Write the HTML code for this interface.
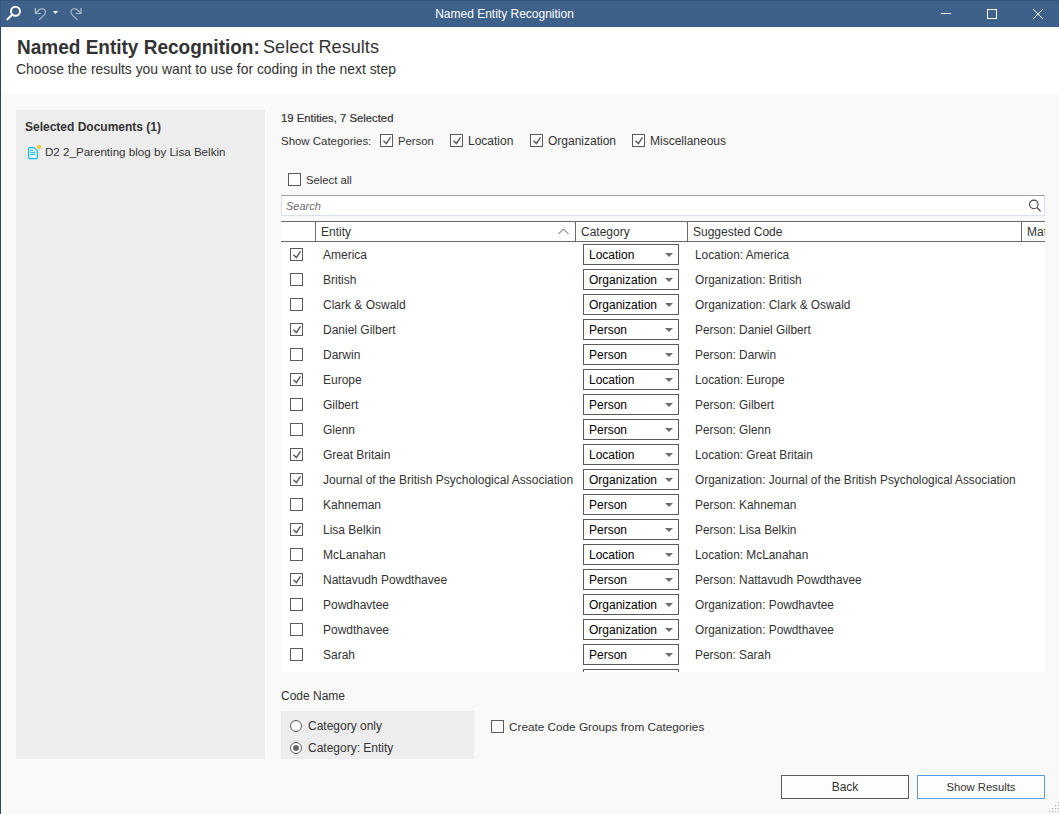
<!DOCTYPE html>
<html><head><meta charset="utf-8"><style>
*{box-sizing:border-box;margin:0;padding:0}
html,body{width:1059px;height:814px;overflow:hidden;background:#f9f9f9;font-family:"Liberation Sans",sans-serif;color:#333}
.abs{position:absolute}
#frame{position:absolute;left:0;top:27px;width:1px;height:787px;background:#24466f}
#title{position:absolute;left:0;top:0;width:1059px;height:27px;background:#3e6189;border-top:1px solid #35557b;border-bottom:1px solid #37587f}
#title .tt{position:absolute;left:0;width:1009px;top:6px;text-align:center;color:#fff;font-size:12px;line-height:14px}
#hdr{position:absolute;left:1px;top:27px;width:1058px;height:67px;background:#fff}
.t12{position:absolute;white-space:nowrap;font-size:12px;line-height:16px;color:#333}
.rt{position:absolute;white-space:nowrap;font-size:12px;line-height:27px;color:#333}
.cb{position:absolute;width:13px;height:13px;border:1px solid #5a5a5a;background:#fff}
#left{position:absolute;left:16px;top:110px;width:249px;height:649px;background:#ededed}
#table{position:absolute;left:281px;top:221px;width:764px;height:451px;background:#fff;overflow:hidden}
#thead{position:absolute;left:0;top:0;width:764px;height:21px;border-top:1px solid #6a6a6a;border-bottom:1px solid #6a6a6a}
.vd{position:absolute;top:0;width:1px;height:19px;background:#6a6a6a}
.ht{position:absolute;top:1px;font-size:12px;line-height:19px;white-space:nowrap;color:#333}
.combo{position:absolute;width:96px;height:21px;border:1px solid #5a5a5a;background:#fff}
.combo span{position:absolute;left:5px;top:1px;font-size:12px;line-height:19px;color:#000}
.combo i{position:absolute;left:81px;top:8px;width:0;height:0;border-left:4px solid transparent;border-right:4px solid transparent;border-top:4px solid #6d6d6d}
#search{position:absolute;left:281px;top:195px;width:764px;height:21px;background:#fff;border:1px solid #dbe1e8;border-top-color:#a0a0a0}
#search span{position:absolute;left:4px;top:1px;line-height:19px;font-size:11px;font-style:italic;color:#6d6d6d}
#radiobox{position:absolute;left:281px;top:711px;width:193px;height:48px;background:#ededed}
.rad{position:absolute;width:12px;height:12px;border:1px solid #5a5a5a;border-radius:50%;background:#fff}
.btn{position:absolute;top:775px;width:128px;height:24px;border:1px solid #5a5a5a;background:#fdfdfd;text-align:center;font-size:12px;line-height:23px;color:#333}
</style></head><body>
<div id="title">
 <svg class="abs" style="left:0px;top:-1px" width="30" height="26" viewBox="0 0 30 26"><circle cx="15.5" cy="11.3" r="4.5" fill="none" stroke="#fff" stroke-width="2"/><path d="M12.2 14.8 L7.4 19.3" stroke="#fff" stroke-width="2" stroke-linecap="round"/></svg>
 <svg class="abs" style="left:0px;top:-1px" width="90" height="26" viewBox="0 0 90 26"><path d="M35.4 8 V13.5 H40.8" fill="none" stroke="#b4c2d4" stroke-width="1.1"/><path d="M35.8 13.2 L38.8 10 C41 8 44.5 8.5 45.3 11 C45.8 12.5 45.2 14 44 15.2 L39 19.8" fill="none" stroke="#b4c2d4" stroke-width="1.1"/><path d="M52.9 11 L58.1 11 L55.5 14Z" fill="#fff"/><path d="M81 8 V13.5 H75.6" fill="none" stroke="#b4c2d4" stroke-width="1.1"/><path d="M80.6 13.2 L77.6 10 C75.4 8 71.9 8.5 71.1 11 C70.6 12.5 71.2 14 72.4 15.2 L77.4 19.8" fill="none" stroke="#b4c2d4" stroke-width="1.1"/></svg>
 <div class="tt">Named Entity Recognition</div>
 <div class="abs" style="left:941px;top:12px;width:10px;height:1px;background:#fff"></div>
 <div class="abs" style="left:987px;top:8px;width:10px;height:10px;border:1px solid #fff"></div>
 <svg class="abs" style="left:1033px;top:8px" width="10" height="10" viewBox="0 0 10 10"><path d="M0 0 L10 10 M10 0 L0 10" stroke="#fff" stroke-width="1"/></svg>
</div>
<div id="frame"></div><div class="abs" style="left:0;top:1px;width:1px;height:25px;background:#395a80"></div>
<div id="hdr">
 <div class="abs" style="left:16px;top:9px;font-size:20px;line-height:22px;white-space:nowrap;color:#333;font-weight:bold;transform:scaleX(0.95);transform-origin:0 0">Named Entity Recognition:</div><div class="abs" style="left:262px;top:9px;font-size:19px;line-height:22px;white-space:nowrap;color:#333;transform:scaleX(0.955);transform-origin:0 0">Select Results</div>
 <div class="abs" style="left:15px;top:34px;font-size:13.9px;line-height:17px;white-space:nowrap;color:#333">Choose the results you want to use for coding in the next step</div>
</div>
<div id="left">
 <div class="abs" style="left:9px;top:9px;font-size:12px;line-height:16px;font-weight:bold;white-space:nowrap">Selected Documents (1)</div>
 <svg class="abs" style="left:11px;top:35px" width="16" height="16" viewBox="0 0 16 16"><path d="M2.6 2.6 Q1.6 2.6 1.6 3.6 V12.6 Q1.6 13.6 2.6 13.6 H9.4 Q10.4 13.6 10.4 12.6 V6 L7 2.6 Z" fill="#e4f6fb" stroke="#1bb8e2" stroke-width="1.2"/><path d="M3.3 5.4 H6 M3.3 7.4 H8.5 M3.3 9.5 H8.5" stroke="#1bb8e2" stroke-width="1"/><circle cx="12.1" cy="2" r="2.1" fill="#ffcc22"/></svg>
 <div class="abs" style="left:29px;top:34px;font-size:11.6px;line-height:16px;white-space:nowrap">D2 2_Parenting blog by Lisa Belkin</div>
</div>
<div class="t12" style="left:281px;top:110px;font-size:11.3px;-webkit-text-stroke:0.2px #333">19 Entities, 7 Selected</div>
<div class="t12" style="left:281px;top:133px;font-size:11.45px">Show Categories:</div>
<div class="cb" style="left:380px;top:134px"><svg width="13" height="13" viewBox="0 0 13 13" style="position:absolute;left:0;top:0"><path d="M2.4 5.7 L5.4 8.5 L9.5 2.4" fill="none" stroke="#606060" stroke-width="1.5"/></svg></div><div class="t12" style="left:398px;top:133px;font-size:11.3px">Person</div>
<div class="cb" style="left:450px;top:134px"><svg width="13" height="13" viewBox="0 0 13 13" style="position:absolute;left:0;top:0"><path d="M2.4 5.7 L5.4 8.5 L9.5 2.4" fill="none" stroke="#606060" stroke-width="1.5"/></svg></div><div class="t12" style="left:468px;top:133px">Location</div>
<div class="cb" style="left:530px;top:134px"><svg width="13" height="13" viewBox="0 0 13 13" style="position:absolute;left:0;top:0"><path d="M2.4 5.7 L5.4 8.5 L9.5 2.4" fill="none" stroke="#606060" stroke-width="1.5"/></svg></div><div class="t12" style="left:548px;top:133px">Organization</div>
<div class="cb" style="left:632px;top:134px"><svg width="13" height="13" viewBox="0 0 13 13" style="position:absolute;left:0;top:0"><path d="M2.4 5.7 L5.4 8.5 L9.5 2.4" fill="none" stroke="#606060" stroke-width="1.5"/></svg></div><div class="t12" style="left:650px;top:133px">Miscellaneous</div>
<div class="cb" style="left:288px;top:173px"></div><div class="t12" style="left:306px;top:172px;font-size:11.3px">Select all</div>
<div id="search"><span>Search</span>
 <svg class="abs" style="left:746px;top:2px" width="16" height="16" viewBox="0 0 16 16"><circle cx="5.8" cy="6.4" r="4.3" fill="none" stroke="#444" stroke-width="1.1"/><path d="M8.9 9.5 L12.6 13.3" stroke="#444" stroke-width="1.1"/></svg>
</div>
<div id="table">
 <div id="thead">
  <div class="vd" style="left:34px"></div>
  <div class="ht" style="left:40px">Entity</div>
  <svg class="abs" style="left:277px;top:6px" width="11" height="7" viewBox="0 0 11 7"><path d="M0.5 6 L5.5 1 L10.5 6" fill="none" stroke="#555" stroke-width="1"/></svg>
  <div class="vd" style="left:294px"></div>
  <div class="ht" style="left:300px">Category</div>
  <div class="vd" style="left:406px"></div>
  <div class="ht" style="left:412px">Suggested Code</div>
  <div class="vd" style="left:740px"></div>
  <div class="ht" style="left:746px">Matches</div>
 </div>
 <div class="cb" style="left:9px;top:27px"><svg width="13" height="13" viewBox="0 0 13 13" style="position:absolute;left:0;top:0"><path d="M2.4 5.7 L5.4 8.5 L9.5 2.4" fill="none" stroke="#606060" stroke-width="1.5"/></svg></div><div class="rt" style="left:42px;top:21px">America</div><div class="combo" style="left:302px;top:23px"><span>Location</span><i></i></div><div class="rt" style="left:414px;top:21px;font-size:11.85px">Location: America</div><div class="cb" style="left:9px;top:52px"></div><div class="rt" style="left:42px;top:46px">British</div><div class="combo" style="left:302px;top:48px"><span>Organization</span><i></i></div><div class="rt" style="left:414px;top:46px;font-size:11.85px">Organization: British</div><div class="cb" style="left:9px;top:77px"></div><div class="rt" style="left:42px;top:71px">Clark &amp; Oswald</div><div class="combo" style="left:302px;top:73px"><span>Organization</span><i></i></div><div class="rt" style="left:414px;top:71px;font-size:11.85px">Organization: Clark &amp; Oswald</div><div class="cb" style="left:9px;top:102px"><svg width="13" height="13" viewBox="0 0 13 13" style="position:absolute;left:0;top:0"><path d="M2.4 5.7 L5.4 8.5 L9.5 2.4" fill="none" stroke="#606060" stroke-width="1.5"/></svg></div><div class="rt" style="left:42px;top:96px">Daniel Gilbert</div><div class="combo" style="left:302px;top:98px"><span>Person</span><i></i></div><div class="rt" style="left:414px;top:96px;font-size:11.85px">Person: Daniel Gilbert</div><div class="cb" style="left:9px;top:127px"></div><div class="rt" style="left:42px;top:121px">Darwin</div><div class="combo" style="left:302px;top:123px"><span>Person</span><i></i></div><div class="rt" style="left:414px;top:121px;font-size:11.85px">Person: Darwin</div><div class="cb" style="left:9px;top:152px"><svg width="13" height="13" viewBox="0 0 13 13" style="position:absolute;left:0;top:0"><path d="M2.4 5.7 L5.4 8.5 L9.5 2.4" fill="none" stroke="#606060" stroke-width="1.5"/></svg></div><div class="rt" style="left:42px;top:146px">Europe</div><div class="combo" style="left:302px;top:148px"><span>Location</span><i></i></div><div class="rt" style="left:414px;top:146px;font-size:11.85px">Location: Europe</div><div class="cb" style="left:9px;top:177px"></div><div class="rt" style="left:42px;top:171px">Gilbert</div><div class="combo" style="left:302px;top:173px"><span>Person</span><i></i></div><div class="rt" style="left:414px;top:171px;font-size:11.85px">Person: Gilbert</div><div class="cb" style="left:9px;top:202px"></div><div class="rt" style="left:42px;top:196px">Glenn</div><div class="combo" style="left:302px;top:198px"><span>Person</span><i></i></div><div class="rt" style="left:414px;top:196px;font-size:11.85px">Person: Glenn</div><div class="cb" style="left:9px;top:227px"><svg width="13" height="13" viewBox="0 0 13 13" style="position:absolute;left:0;top:0"><path d="M2.4 5.7 L5.4 8.5 L9.5 2.4" fill="none" stroke="#606060" stroke-width="1.5"/></svg></div><div class="rt" style="left:42px;top:221px">Great Britain</div><div class="combo" style="left:302px;top:223px"><span>Location</span><i></i></div><div class="rt" style="left:414px;top:221px;font-size:11.85px">Location: Great Britain</div><div class="cb" style="left:9px;top:252px"><svg width="13" height="13" viewBox="0 0 13 13" style="position:absolute;left:0;top:0"><path d="M2.4 5.7 L5.4 8.5 L9.5 2.4" fill="none" stroke="#606060" stroke-width="1.5"/></svg></div><div class="rt" style="left:42px;top:246px">Journal of the British Psychological Association</div><div class="combo" style="left:302px;top:248px"><span>Organization</span><i></i></div><div class="rt" style="left:414px;top:246px;font-size:11.85px">Organization: Journal of the British Psychological Association</div><div class="cb" style="left:9px;top:277px"></div><div class="rt" style="left:42px;top:271px">Kahneman</div><div class="combo" style="left:302px;top:273px"><span>Person</span><i></i></div><div class="rt" style="left:414px;top:271px;font-size:11.85px">Person: Kahneman</div><div class="cb" style="left:9px;top:302px"><svg width="13" height="13" viewBox="0 0 13 13" style="position:absolute;left:0;top:0"><path d="M2.4 5.7 L5.4 8.5 L9.5 2.4" fill="none" stroke="#606060" stroke-width="1.5"/></svg></div><div class="rt" style="left:42px;top:296px">Lisa Belkin</div><div class="combo" style="left:302px;top:298px"><span>Person</span><i></i></div><div class="rt" style="left:414px;top:296px;font-size:11.85px">Person: Lisa Belkin</div><div class="cb" style="left:9px;top:327px"></div><div class="rt" style="left:42px;top:321px">McLanahan</div><div class="combo" style="left:302px;top:323px"><span>Location</span><i></i></div><div class="rt" style="left:414px;top:321px;font-size:11.85px">Location: McLanahan</div><div class="cb" style="left:9px;top:352px"><svg width="13" height="13" viewBox="0 0 13 13" style="position:absolute;left:0;top:0"><path d="M2.4 5.7 L5.4 8.5 L9.5 2.4" fill="none" stroke="#606060" stroke-width="1.5"/></svg></div><div class="rt" style="left:42px;top:346px">Nattavudh Powdthavee</div><div class="combo" style="left:302px;top:348px"><span>Person</span><i></i></div><div class="rt" style="left:414px;top:346px;font-size:11.85px">Person: Nattavudh Powdthavee</div><div class="cb" style="left:9px;top:377px"></div><div class="rt" style="left:42px;top:371px">Powdhavtee</div><div class="combo" style="left:302px;top:373px"><span>Organization</span><i></i></div><div class="rt" style="left:414px;top:371px;font-size:11.85px">Organization: Powdhavtee</div><div class="cb" style="left:9px;top:402px"></div><div class="rt" style="left:42px;top:396px">Powdthavee</div><div class="combo" style="left:302px;top:398px"><span>Organization</span><i></i></div><div class="rt" style="left:414px;top:396px;font-size:11.85px">Organization: Powdthavee</div><div class="cb" style="left:9px;top:427px"></div><div class="rt" style="left:42px;top:421px">Sarah</div><div class="combo" style="left:302px;top:423px"><span>Person</span><i></i></div><div class="rt" style="left:414px;top:421px;font-size:11.85px">Person: Sarah</div><div class="combo" style="left:302px;top:448px"></div>
</div>
<div class="t12" style="left:281px;top:688px">Code Name</div>
<div id="radiobox">
 <div class="rad" style="left:9px;top:9px"></div>
 <div class="t12" style="left:27px;top:7px">Category only</div>
 <div class="rad" style="left:9px;top:31px"><div class="abs" style="left:2px;top:2px;width:6px;height:6px;border-radius:50%;background:#666"></div></div>
 <div class="t12" style="left:27px;top:29px">Category: Entity</div>
</div>
<div class="cb" style="left:491px;top:720px"></div><div class="t12" style="left:509px;top:719px;font-size:11.75px">Create Code Groups from Categories</div>
<div class="btn" style="left:781px">Back</div>
<div class="btn" style="left:917px;border-color:#5c9ae6"><span style="font-size:11.3px">Show Results</span></div>
<svg class="abs" style="left:1047px;top:800px" width="14" height="14" viewBox="0 0 14 14"><g fill="#97a5c2"><rect x="11" y="2" width="1" height="1"/><rect x="11" y="5" width="1" height="1"/><rect x="8" y="5" width="1" height="1"/><rect x="11" y="8" width="1" height="1"/><rect x="8" y="8" width="1" height="1"/><rect x="5" y="8" width="1" height="1"/><rect x="11" y="11" width="1" height="1"/><rect x="8" y="11" width="1" height="1"/><rect x="5" y="11" width="1" height="1"/><rect x="2" y="11" width="1" height="1"/></g></svg>
</body></html>
